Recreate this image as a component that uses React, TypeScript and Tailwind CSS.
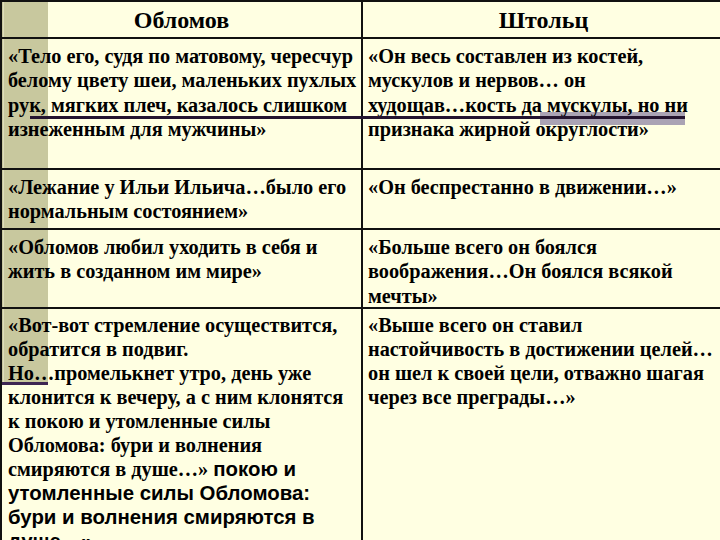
import React from "react";

const serif = { fontFamily: '"Liberation Serif", "Times New Roman", serif' };
const sans = { fontFamily: '"Liberation Sans", Arial, sans-serif' };

function Lines({ lines, tight }: { lines: React.ReactNode[]; tight?: boolean }) {
  return (
    <div
      className={`whitespace-nowrap font-bold text-[20.3px] text-black ${tight ? "leading-[24px]" : "leading-[24.4px]"}`}
      style={serif}
    >
      {lines.map((l, i) => (
        <div key={i}>{l}</div>
      ))}
    </div>
  );
}

function Row({
  h,
  left,
  right,
  last,
}: {
  h: string;
  left: React.ReactNode[];
  right: React.ReactNode[];
  last?: boolean;
}) {
  return (
    <div className={`grid grid-cols-[361px_1fr] ${h} ${last ? "" : "border-b-2 border-[#111]"}`}>
      <div className={`border-r-2 border-[#111] pl-[6px] overflow-hidden ${last ? "pt-[4px]" : "pt-[5px]"}`}>
        <Lines lines={left} tight={last} />
      </div>
      <div className={`pl-[5px] overflow-hidden ${last ? "pt-[4px]" : "pt-[5px]"}`}>
        <Lines lines={right} tight={last} />
      </div>
    </div>
  );
}

export default function App() {
  return (
    <div className="relative w-[720px] h-[540px] overflow-hidden bg-[#ffffe2]">
      {/* slide decoration: olive band */}
      <div className="absolute left-0 top-0 w-[48px] h-[383px] bg-[#c8c89e]" />
      <div className="absolute left-[3px] top-0 w-px h-[383px] bg-[#dedcbc]" />
      <div className="absolute left-0 top-[382px] w-[48px] h-[3px] bg-[#3d2552]" />
      {/* highlight bar */}
      <div className="absolute left-[540px] top-[112px] w-[145px] h-[13px] bg-[#aaa3b4]" />

      <div className="relative w-[724px] border-t-2 border-l-2 border-[#111]">
        <div className="grid grid-cols-[361px_1fr] h-[37px] border-b-2 border-[#111]">
          <div
            className="border-r-2 border-[#111] flex items-center justify-center font-bold text-[24px] text-black"
            style={serif}
          >
            Обломов
          </div>
          <div className="flex items-center justify-center font-bold text-[24px] text-black" style={serif}>
            Штольц
          </div>
        </div>
        <Row
          h="h-[131px]"
          left={[
            "«Тело его, судя по матовому, чересчур",
            "белому цвету шеи, маленьких пухлых",
            "рук, мягких плеч, казалось слишком",
            "изнеженным для мужчины»",
          ]}
          right={[
            "«Он весь составлен из костей,",
            "мускулов и нервов… он",
            "худощав…кость да мускулы, но ни",
            "признака жирной округлости»",
          ]}
        />
        <Row
          h="h-[60px]"
          left={["«Лежание у Ильи Ильича…было его", "нормальным состоянием»"]}
          right={["«Он беспрестанно в движении…»"]}
        />
        <Row
          h="h-[79px]"
          left={["«Обломов любил уходить в себя и", "жить в созданном им мире»"]}
          right={["«Больше всего он боялся", "воображения…Он боялся всякой", "мечты»"]}
        />
        <Row
          h="h-[240px]"
          last
          left={[
            "«Вот-вот стремление осуществится,",
            "обратится в подвиг.",
            "Но…промелькнет утро, день уже",
            "клонится к вечеру, а с ним клонятся",
            "к покою и утомленные силы",
            "Обломова: бури и волнения",
            <>
              смиряются в душе…»{" "}
              <span className="text-[20.4px]" style={sans}>
                покою и
              </span>
            </>,
            <span className="text-[20.4px]" style={sans}>
              утомленные силы Обломова:
            </span>,
            <span className="text-[20.4px]" style={sans}>
              бури и волнения смиряются в
            </span>,
            <span className="text-[20.4px]" style={sans}>
              душе…»
            </span>,
          ]}
          right={[
            "«Выше всего он ставил",
            "настойчивость в достижении целей…",
            "он шел к своей цели, отважно шагая",
            "через все преграды…»",
          ]}
        />
      </div>

      {/* underline stroke across row 1 */}
      <div className="absolute left-[30px] top-[116px] w-[655px] h-[3px] bg-[#24142f]" />
    </div>
  );
}
